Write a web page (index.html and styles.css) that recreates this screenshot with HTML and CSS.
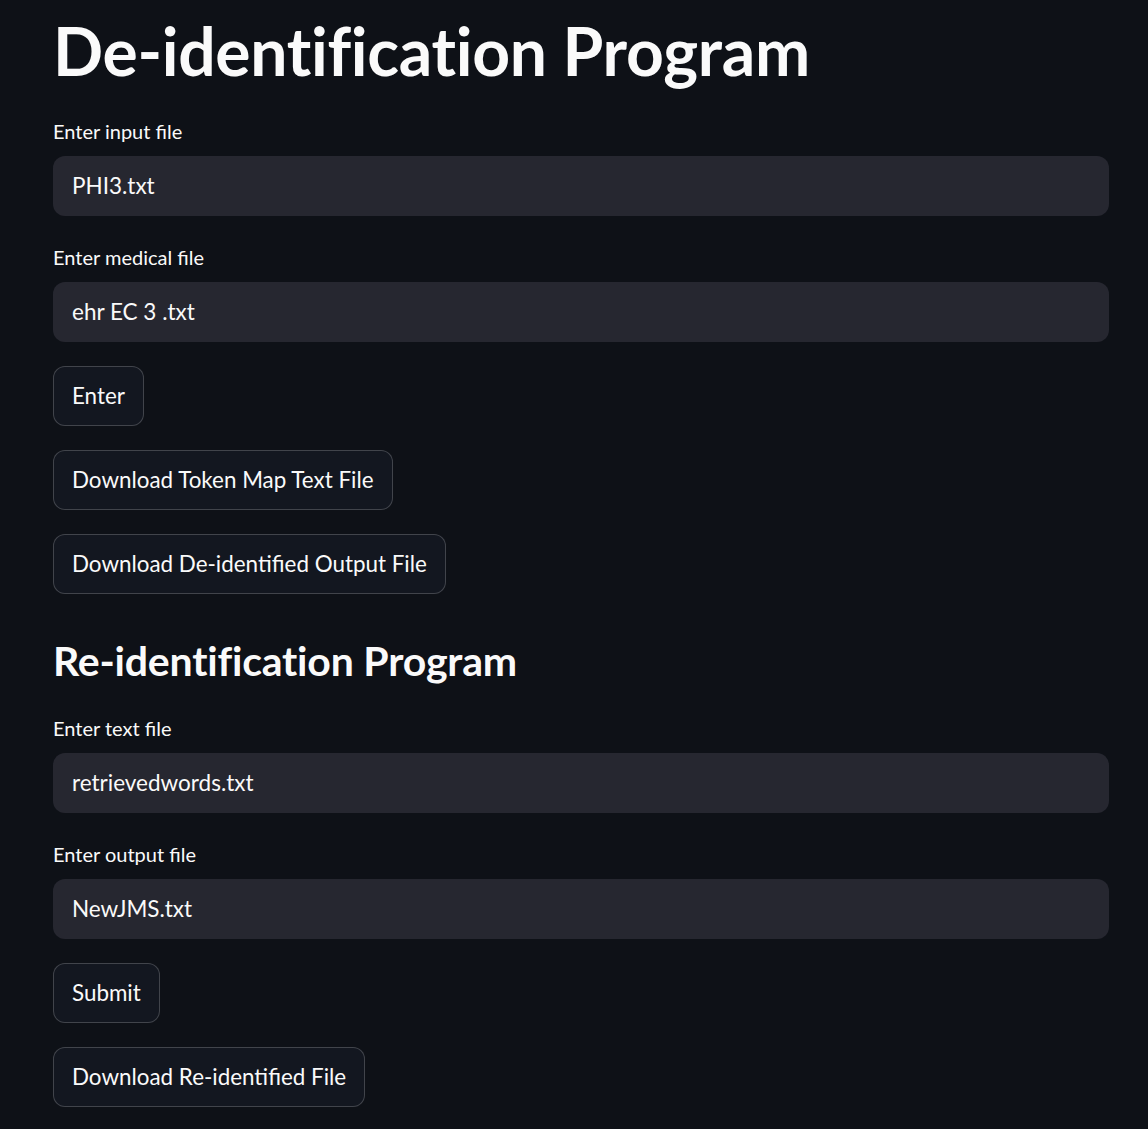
FILE: index.html
```html
<!DOCTYPE html>
<html lang="en">
<head>
<meta charset="utf-8">
<title>De-identification Program</title>
<link rel="stylesheet" href="styles.css">
</head>
<body>
<main class="page">
  <h1 class="title">De-identification Program</h1>

  <div class="field">
    <label class="label">Enter input file</label>
    <div class="input">PHI3.txt</div>
  </div>

  <div class="field">
    <label class="label">Enter medical file</label>
    <div class="input">ehr EC 3 .txt</div>
  </div>

  <div class="row"><button class="btn">Enter</button></div>
  <div class="row"><button class="btn">Download Token Map Text File</button></div>
  <div class="row"><button class="btn">Download De-identified Output File</button></div>

  <h3 class="subtitle">Re-identification Program</h3>

  <div class="field">
    <label class="label">Enter text file</label>
    <div class="input">retrievedwords.txt</div>
  </div>

  <div class="field">
    <label class="label">Enter output file</label>
    <div class="input">NewJMS.txt</div>
  </div>

  <div class="row"><button class="btn">Submit</button></div>
  <div class="row"><button class="btn">Download Re-identified File</button></div>
</main>
</body>
</html>
```

FILE: styles.css
```css
html, body {
  margin: 0;
  padding: 0;
  background: #0e1117;
  color: #fafafa;
  font-family: "Lato", "Liberation Sans", sans-serif;
}

.page {
  width: 1056px;
  margin-left: 53px;
  display: flex;
  flex-direction: column;
  gap: 24px;
  padding-bottom: 40px;
}

.title {
  margin: 0;
  height: 90px;
  font-size: 66px;
  font-weight: 700;
  line-height: 78px;
  letter-spacing: -0.3px;
  display: flex;
  align-items: flex-end;
  box-sizing: border-box;
}

.subtitle {
  margin: 0;
  height: 69px;
  font-size: 41px;
  font-weight: 700;
  line-height: 86px;
  letter-spacing: -0.2px;
  box-sizing: border-box;
}

.field {
  display: flex;
  flex-direction: column;
}

.label {
  height: 42px;
  font-size: 20px;
  line-height: 34px;
  display: block;
}

.input {
  height: 60px;
  box-sizing: border-box;
  background: #262730;
  border-radius: 12px;
  padding: 0 19px;
  font-size: 22.5px;
  line-height: 60px;
  color: #fafafa;
}

.row {
  display: flex;
}

.btn {
  height: 60px;
  box-sizing: border-box;
  background: #131720;
  border: 1px solid rgba(250, 250, 250, 0.2);
  border-radius: 12px;
  padding: 0 18px;
  color: #fafafa;
  font-family: inherit;
  font-size: 22.4px;
  line-height: 58px;
  cursor: pointer;
}
```
